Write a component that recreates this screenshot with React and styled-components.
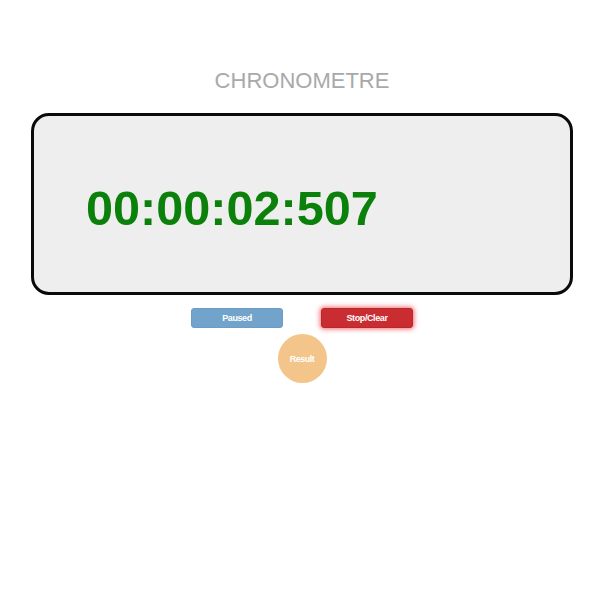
import React from "react";
import styled, { createGlobalStyle } from "styled-components";

const Global = createGlobalStyle`
  html, body { margin: 0; padding: 0; background: #fff; }
  body { font-family: "Liberation Sans", Arial, sans-serif; }
`;

const Page = styled.div`
  width: 600px;
  box-sizing: border-box;
  padding-left: 4px;
  display: flex;
  flex-direction: column;
  align-items: center;
`;

const Title = styled.h1`
  margin: 68px 0 0;
  font-size: 22px;
  line-height: 26px;
  font-weight: normal;
  color: #a9a9a9;
`;

const Display = styled.div`
  margin-top: 19px;
  width: 542px;
  height: 182px;
  box-sizing: border-box;
  border: 3px solid #0a0a0a;
  border-radius: 18px;
  background: #eeeeee;
  padding: 65px 0 0 52px;
`;

const Time = styled.div`
  font-size: 48.6px;
  font-weight: bold;
  color: #0b800b;
  line-height: 55px;
`;

const Buttons = styled.div`
  margin-top: 13px;
  display: flex;
  gap: 38px;
`;

const Button = styled.button`
  width: 92px;
  height: 20px;
  border-radius: 3px;
  border: 1px solid ${(p) => p.$border};
  background: ${(p) => p.$bg};
  color: #fff;
  font-family: "Liberation Sans", Arial, sans-serif;
  font-size: 9px;
  font-weight: bold;
  letter-spacing: -0.4px;
  padding: 0;
  box-shadow: ${(p) => p.$glow || "none"};
`;

const Round = styled.button`
  margin-top: 6px;
  width: 49px;
  height: 49px;
  border-radius: 50%;
  border: none;
  background: #f4c58a;
  color: #fff;
  font-family: "Liberation Sans", Arial, sans-serif;
  font-size: 9px;
  font-weight: bold;
  letter-spacing: -0.5px;
  padding: 0;
`;

export default function App() {
  return (
    <>
      <Global />
      <Page>
        <Title>CHRONOMETRE</Title>
        <Display>
          <Time>00:00:02:507</Time>
        </Display>
        <Buttons>
          <Button $bg="#72a3cb" $border="#6d9dc6">Paused</Button>
          <Button
            $bg="#c92d31"
            $border="#b8282b"
            $glow="0 0 5px 1px rgba(240, 40, 50, 0.7)"
          >
            Stop/Clear
          </Button>
        </Buttons>
        <Round>Result</Round>
      </Page>
    </>
  );
}
